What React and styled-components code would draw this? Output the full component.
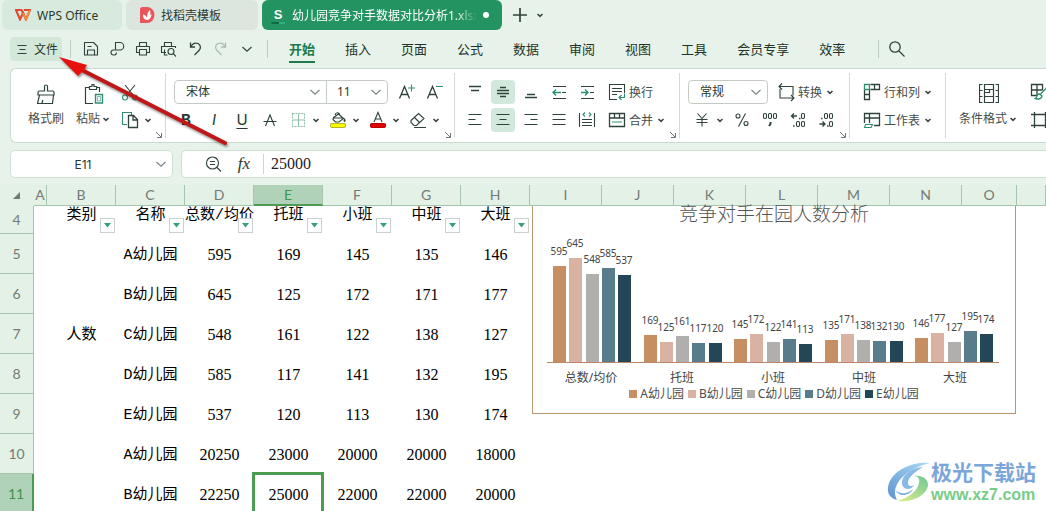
import { Fragment } from "react";
import styled, { createGlobalStyle } from "styled-components";

const GlobalStyle = createGlobalStyle`
  * {
    box-sizing: border-box;
  }

  body {
    margin: 0;
    font-family: "Noto Sans", "Noto Sans CJK SC", sans-serif;
    font-size: 12px;
    color: #27382f;
  }

  button, select, input {
    font: inherit;
    color: inherit;
    margin: 0;
    padding: 0;
    border: 0;
    background: none;
  }
`;

const Page = styled.div`
  position: relative;
  height: 100vh;
  overflow: hidden;
  display: flex;
  flex-direction: column;
  background-color: #e7f3ea;
`;

/* ---------- window tabs ---------- */

const TabStrip = styled.header`
  flex: none;
  display: flex;
  align-items: center;
  gap: 4px;
  height: 30px;
  padding-left: 2px;
`;

const WindowTab = styled.button`
  flex: none;
  display: flex;
  align-items: center;
  gap: 6px;
  width: ${(props) => props.$width};
  height: 30px;
  padding: 0 13px 0 ${(props) => (props.$active ? "8px" : "13px")};
  border-radius: 6px;
  background-color: ${(props) => props.$bkg};
  color: ${(props) => (props.$active ? "#fff" : "#2b3a31")};
`;

const TabTitle = styled.span`
  flex: 1;
  text-align: left;
  white-space: nowrap;
  overflow: hidden;
  mask-image: ${(props) =>
    props.$fade ? "linear-gradient(90deg, #000 88%, transparent)" : "none"};
`;

const UnsavedDot = styled.span`
  width: 6px;
  height: 6px;
  border-radius: 50%;
  background-color: #fff;
`;

const StripActions = styled.div`
  display: flex;
  align-items: center;
  padding-left: 2px;
`;

/* ---------- menu bar ---------- */

const MenuBar = styled.div`
  flex: none;
  display: flex;
  align-items: center;
  height: 38px;
  padding-left: 10px;
`;

const FileButton = styled.button`
  display: flex;
  align-items: center;
  gap: 5px;
  width: 52px;
  height: 24px;
  padding-left: 6px;
  border-radius: 4px;
  background-color: #d4e8da;
  white-space: nowrap;
`;

const Divider = styled.span`
  flex: none;
  width: 1px;
  height: 18px;
  margin: 0 ${(props) => props.$after} 0 ${(props) => props.$before};
  background-color: #bccbc1;
`;

const Nav = styled.nav`
  display: flex;
  gap: 30px;
`;

const NavLink = styled.a`
  flex: none;
  height: 28px;
  font-size: 13px;
  line-height: 28px;
  white-space: nowrap;
  text-decoration: none;
  font-weight: ${(props) => (props.$active ? 700 : 400)};
  color: ${(props) => (props.$active ? "#1f7a4d" : "#1f3328")};
  border-bottom: 2px solid ${(props) => (props.$active ? "#1f7a4d" : "transparent")};
`;

/* ---------- ribbon ---------- */

const Ribbon = styled.section`
  flex: none;
  display: flex;
  align-items: stretch;
  height: 75px;
  margin-left: 10px;
  overflow: hidden;
  background-color: #fff;
  border: 1px solid #ccdbd1;
  border-right: 0;
  border-radius: 6px 0 0 6px;
`;

const Group = styled.div`
  position: relative;
  flex: none;
  display: flex;
  align-items: center;
  padding: 0 ${(props) => props.$end || "12px"} 0 ${(props) => props.$start || "8px"};

  &:not(:last-child)::after {
    content: "";
    position: absolute;
    right: 0;
    top: 4px;
    bottom: 4px;
    width: 1px;
    background-color: #d5dad7;
  }
`;

const Launcher = styled.button`
  position: absolute;
  right: 3px;
  bottom: 3px;
  width: 8px;
  height: 8px;
  display: flex;
`;

const Stack = styled.div`
  display: flex;
  flex-direction: column;
  gap: 4px;
  padding-left: ${(props) => props.$inset || 0};
`;

const Row = styled.div`
  display: flex;
  align-items: center;
  gap: 4px;
  height: 24px;
  padding-left: ${(props) => props.$inset || 0};
`;

const BigButton = styled.button`
  display: flex;
  flex-direction: column;
  align-items: center;
  gap: 6px;
  width: ${(props) => props.$width || "48px"};
  line-height: 18px;
  white-space: nowrap;
  color: #454d49;
`;

const BigLabel = styled.span`
  display: flex;
  align-items: center;
`;

const IconButton = styled.button`
  flex: none;
  display: flex;
  align-items: center;
  justify-content: center;
  width: ${(props) => props.$width || "24px"};
  height: 24px;
  border-radius: 4px;
  background-color: ${(props) => (props.$active ? "#d2e8dd" : "transparent")};
`;

const Split = styled.div`
  display: flex;
`;

const TextButton = styled.button`
  display: flex;
  align-items: center;
  gap: 2px;
  height: 24px;
  padding-left: 4px;
  white-space: nowrap;
  color: #454d49;
`;

const FieldBox = styled.div`
  display: flex;
  height: 24px;
  border: 1px solid #c3cac6;
  border-radius: 4px;
`;

const SelectWrap = styled.div`
  position: relative;
  width: ${(props) => props.$width};

  & + & {
    border-left: 1px solid #c3cac6;
  }

  svg {
    position: absolute;
    right: 5px;
    top: 5px;
    pointer-events: none;
  }
`;

const Select = styled.select`
  appearance: none;
  width: 100%;
  height: 22px;
  padding-left: ${(props) => props.$inset || "11px"};
`;

/* ---------- formula bar ---------- */

const FormulaBar = styled.div`
  flex: none;
  display: flex;
  gap: 8px;
  height: 28px;
  margin: 7px 0 7px 10px;
`;

const NameBox = styled.div`
  display: flex;
  align-items: center;
  width: 163px;
  padding-right: 5px;
  background-color: #fff;
  border: 1px solid #d0dfd5;
  border-radius: 5px;
`;

const NameInput = styled.input`
  flex: 1;
  min-width: 0;
  text-align: center;
  font-family: Inter, sans-serif;
`;

const FormulaBox = styled.div`
  flex: 1;
  display: flex;
  align-items: center;
  gap: 7px;
  padding-left: 19px;
  background-color: #fff;
  border: 1px solid #d0dfd5;
  border-right: 0;
  border-radius: 5px 0 0 5px;
`;

const FormulaInput = styled.input`
  flex: 1;
  min-width: 0;
  height: 20px;
  padding-left: 7px;
  border-left: 1px solid #cfd6d2;
  font-family: "Liberation Serif", serif;
  font-size: 16px;
  color: #222;
`;

/* ---------- sheet ---------- */

const Sheet = styled.main`
  position: relative;
  flex: 1;
  min-height: 0;
  overflow: hidden;
  background-color: #fff;
`;

const Grid = styled.table`
  width: 100%;
  min-width: 1017px;
  table-layout: fixed;
  border-collapse: separate;
  border-spacing: 0;
`;

const Col = styled.col`
  width: ${(props) => props.$width};
`;

const ColHead = styled.th`
  height: 21px;
  padding: 0;
  font-family: Lato, sans-serif;
  font-size: 14px;
  line-height: 18px;
  font-weight: 400;
  color: ${(props) => (props.$active ? "#3f9548" : "#747b76")};
  background-color: ${(props) => (props.$active ? "#b0d2b8" : "#e4f1e6")};
  border-right: 1px solid ${(props) => (props.$corner ? "transparent" : "#a5c5ae")};
  border-bottom: ${(props) =>
    props.$active ? "2px solid #4b9b50" : props.$corner ? "1px solid transparent" : "1px solid #a5c5ae"};

  svg {
    display: block;
    margin: 1px 0 0 13px;
  }
`;

const RowHead = styled.th`
  padding: 0;
  font-family: Lato, sans-serif;
  font-size: 14px;
  line-height: 18px;
  font-weight: 400;
  color: ${(props) => (props.$active ? "#3f9548" : "#747b76")};
  background-color: ${(props) => (props.$active ? "#b0d2b8" : "#e4f1e6")};
  border-right: ${(props) => (props.$active ? "2px solid #4b9b50" : "1px solid #a5c5ae")};
  border-bottom: 1px solid #a5c5ae;
`;

const SheetRow = styled.tr`
  height: ${(props) => (props.$short ? "28px" : "40px")};
`;

const Cell = styled.td`
  position: relative;
  padding: ${(props) => (props.$top ? "1px" : props.$number ? "2px" : "4px")} 0 0;
  text-align: center;
  white-space: nowrap;
  color: #000;
  line-height: 18px;
  vertical-align: ${(props) => (props.$top ? "top" : "middle")};
  font-family: ${(props) =>
    props.$number ? '"Liberation Serif", serif' : '"Liberation Mono", "Noto Sans CJK SC", monospace'};
  font-size: ${(props) => (props.$number ? "16px" : "15px")};

  &::after {
    content: ${(props) => (props.$selected ? '""' : "none")};
    position: absolute;
    inset: -2px -1px -2px -2px;
    border: 3px solid #4b9b50;
  }
`;

const FilterButton = styled.button`
  position: absolute;
  right: 1px;
  bottom: 1px;
  width: 15px;
  height: 15px;
  display: flex;
  align-items: center;
  justify-content: center;
  background-color: #fff;
  border: 1px solid #cbd0cd;
`;

/* ---------- chart ---------- */

const ChartBox = styled.figure`
  position: absolute;
  left: 532px;
  top: 21px;
  width: 484px;
  margin: 0;
  padding-bottom: 10px;
  background-color: #fff;
  border: 1px solid #b9956f;
  border-top: 0;
  color: #4d4d4d;
`;

const ChartTitle = styled.figcaption`
  height: 18px;
  font-size: 19px;
  font-weight: 300;
  line-height: 16px;
  text-align: center;
  color: #555;
`;

const Plot = styled.svg`
  display: block;
  width: 100%;

  text {
    text-anchor: middle;
    fill: #444;
  }
`;

const Legend = styled.ul`
  display: flex;
  justify-content: center;
  gap: 4px;
  margin: 0;
  padding: 0;
  list-style: none;
  line-height: 18px;
`;

const LegendItem = styled.li`
  display: flex;
  align-items: center;
  gap: 3px;

  &::before {
    content: "";
    width: 8px;
    height: 8px;
    background-color: ${(props) => props.$color};
  }
`;

/* ---------- overlays ---------- */

const Pointer = styled.svg`
  position: absolute;
  left: 50px;
  top: 50px;
  pointer-events: none;
  filter: drop-shadow(1px 2px 1px rgba(0, 0, 0, 0.4));
`;

const SiteMark = styled.div`
  position: absolute;
  right: 10px;
  bottom: 7px;
  display: flex;
  align-items: center;
`;

const SiteText = styled.div`
  display: flex;
  flex-direction: column;
  font-family: "Liberation Sans", "Noto Sans CJK SC", sans-serif;
`;

const SiteName = styled.span`
  font-size: 21px;
  line-height: 26px;
  font-weight: 700;
  color: #7ba6da;
`;

const SiteUrl = styled.span`
  font-size: 16px;
  line-height: 18px;
  font-weight: 700;
  color: #79cc88;
`;

/* ---------- icons ---------- */

const INK = "#2f433a";
const GREEN = "#2f8f74";

const Icon = ({ size = 20, children }) => (
  <svg
    width={size}
    height={size}
    viewBox={`0 0 ${size} ${size}`}
    fill="none"
    stroke={INK}
    strokeWidth="1.1"
    aria-hidden="true"
  >
    {children}
  </svg>
);

const Chevron = () => (
  <svg width="12" height="12" viewBox="0 0 12 12" fill="none" stroke="#3c4a43" strokeWidth="1.6" aria-hidden="true">
    <path d="M3.5 5L6 7.3 8.5 5" />
  </svg>
);

const WideChevron = ({ color = "#7b8580" }) => (
  <svg width="12" height="12" viewBox="0 0 12 12" fill="none" stroke={color} strokeWidth="1.2" aria-hidden="true">
    <path d="M1.5 4L6 8.2 10.5 4" />
  </svg>
);

const icons = {
  menu: <path d="M1.500 2.500h9M3.500 6.500h6M1.500 10.500h9" />,
  save: <path d="M3.5 3.5h9l4 4v8.5h-13zM6.5 16v-5h7v5M6.5 7.500h4" strokeLinejoin="round" />,
  exportPdf: (
    <path d="M8.5 11V3.500h4.500a3.500 3.500 0 0 1 0 7.500H6.500a2.500 2.500 0 0 0 0 5h1a2.500 2.500 0 0 0 2-2.500" />
  ),
  print: (
    <path d="M6.5 7V3.500h7V7M6 13.500H3.500V7.500h13v6H14M6.500 10.500h7v5.500h-7z" strokeLinejoin="round" />
  ),
  preview: (
    <>
      <path d="M5.5 7V3.500h7V7M7 13.500H2.500V7.500h14V9M5.500 10.500v5.500h3" />
      <circle cx="12" cy="12.5" r="3" />
      <path d="M14.2 14.7l2.800 2.800" />
    </>
  ),
  undo: <path d="M5.5 3.500v4.500H10M5.500 8c2-3.500 5-4.500 7.500-3.500 3 1.500 3 5 1 7L9.500 16" strokeWidth="1.3" />,
  redo: (
    <path
      d="M14.5 3.500v4.500H10M14.500 8c-2-3.500-5-4.500-7.500-3.500-3 1.500-3 5-1 7l4.500 4.500"
      stroke="#aebbb3"
      strokeWidth="1.3"
    />
  ),
  search: (
    <>
      <circle cx="8" cy="8" r="5.2" strokeWidth="1.3" />
      <path d="M12 12l5.500 5.500" strokeWidth="1.3" />
    </>
  ),
  plus: <path d="M10 3v14M3 10h14" strokeWidth="1.7" />,
  brush: (
    <path
      d="M8.5 7V2.500a1.500 1.500 0 0 1 3 0V7h5a1.500 1.500 0 0 1 1.500 1.500V11H2V8.500A1.500 1.500 0 0 1 3.500 7zM3.500 11L1.500 19.500h15L17.500 11M6 19.500l.8-3.500"
      strokeWidth="1.2"
    />
  ),
  paste: (
    <>
      <path d="M5 3.500H1.500v16H9M12 3.500h3.500V8M5.500 5.500v-3H8V.500h2v2h2.500v3z" strokeWidth="1.2" />
      <path d="M11.5 10.500h7v8.500h-7z" stroke={GREEN} strokeWidth="1.4" />
      <path d="M13.500 12.500h3v4.500h-3z" stroke={GREEN} strokeWidth=".6" />
    </>
  ),
  cut: (
    <>
      <path d="M5 3l8.500 10.500M15 3L6.500 13.500" />
      <circle cx="5" cy="15.5" r="2.5" stroke={GREEN} />
      <circle cx="15" cy="15.5" r="2.5" stroke={GREEN} />
    </>
  ),
  copy: (
    <>
      <path d="M7 14.500H2.500v-12h9V5" stroke={GREEN} />
      <path d="M8.5 5.500h5l4 4v8h-9zM13 5.500v4.500h4.500" strokeWidth="1.3" />
    </>
  ),
  strike: <path d="M3.5 11.500h13M5.500 16L10 5l4.500 11" />,
  grow: (
    <>
      <path d="M2.5 16.500L7.500 4.500l5 12M4 12.500h7" strokeWidth="1.3" />
      <path d="M14.500 2.500v7M11 6h7" stroke={GREEN} />
    </>
  ),
  shrink: (
    <>
      <path d="M2.5 16.500L7.500 4.500l5 12M4 12.500h7" strokeWidth="1.3" />
      <path d="M11 4.500h7" stroke={GREEN} />
    </>
  ),
  border: (
    <>
      <path d="M4.5 3.500h12v13h-12z" stroke="#8fbfa9" strokeDasharray="2 1" />
      <path d="M10.5 4v12M5 10h11" stroke="#8fbfa9" />
    </>
  ),
  fill: (
    <>
      <path d="M7 5c1-3.500 5-2.500 4.500.5M5.500 7.500l5-3.500 5 4.500-4.500 3.500H7.500L5 9.500zM5.500 8h9" />
      <path d="M16.500 8c1.500 2 1.500 3.500 0 4-1.300-.5-1.300-2 0-4" fill={INK} stroke="none" />
      <rect x="2.5" y="13.5" width="15" height="4" rx="1.5" fill="#ffff00" stroke="#b5b52a" />
    </>
  ),
  fontColor: (
    <>
      <path d="M6 12l4-9.500L14 12M7.500 9h5" />
      <rect x="2.5" y="13.5" width="15" height="4" rx="1.5" fill="#e00000" stroke="#b60000" />
    </>
  ),
  eraser: <path d="M3 10.500L10.500 3.500l5.500 5-7.500 7H6L3 12.500zM6.500 7.500l5.500 5.500M6 17.500h12" />,
  alignTop: <path d="M4 4.500h12M6 8.500h8" strokeWidth="1.3" />,
  alignMiddle: <path d="M7 5.500h6M4 8.500h12M4 11.500h12M7 14.500h6" strokeWidth="1.3" />,
  alignBottom: <path d="M6 12.500h8M4 15.500h12" strokeWidth="1.3" />,
  outdent: (
    <>
      <path d="M4 4.500h13M13 10.500h4M4 16.500h13" />
      <path d="M12 10.500H4M7 7.500l-3 3 3 3" stroke={GREEN} strokeWidth="1.4" />
    </>
  ),
  indent: (
    <>
      <path d="M4 4.500h13M13 10.500h4M4 16.500h13" />
      <path d="M4 10.500h7M8 7.500l3 3-3 3" stroke={GREEN} strokeWidth="1.4" />
    </>
  ),
  alignLeft: <path d="M3.5 4.500h13M3.500 9.500h7M3.500 14.500h13" strokeWidth="1.2" />,
  alignCenter: <path d="M3.5 4.500h13M6.500 9.500h7M3.500 14.500h13" strokeWidth="1.2" />,
  alignRight: <path d="M3.5 4.500h13M9.500 9.500h7M3.500 14.500h13" strokeWidth="1.2" />,
  justify: <path d="M3.5 4.500h13M3.500 9.500h13M3.500 14.500h13" strokeWidth="1.2" />,
  distribute: (
    <>
      <path d="M2.5 3v14M17.500 3v14M5 9.500h10M5 12.500h10M5 15.500h10" />
      <path d="M8 2.500L6 4.500l2 2M12 2.500l2 2-2 2" stroke={GREEN} />
    </>
  ),
  wrap: (
    <>
      <path d="M10 17.500H2.500v-15h15V11M5 6.500h10M5 9.500h10M5 12.500h5" />
      <path d="M17.5 11.500v4h-5M14.500 13l-2.500 2.500 2.500 2.500" stroke={GREEN} />
    </>
  ),
  merge: (
    <>
      <path d="M2.5 3.500h15v13h-15zM2.500 8h15M7.500 3.500V8M12.500 3.500V8" strokeWidth="1.3" />
      <path d="M5 12h10" stroke={GREEN} />
    </>
  ),
  convert: <path d="M6 1.500l-3 3 3 3M3 4.500h14v9M4 7v9h14M15 13l3 3-3 3" />,
  yen: <path d="M5.5 3.500L10 8.500l4.500-5M4.500 9.500h11M4.500 12.500h11M10 8.500v8" />,
  percent: (
    <>
      <circle cx="6" cy="6" r="2" />
      <circle cx="14" cy="13.5" r="2" />
      <path d="M13.5 3.500L6.500 16.500" />
    </>
  ),
  thousands: (
    <>
      <rect x="3.5" y="3.5" width="3" height="5" rx="1.2" />
      <rect x="8.5" y="3.5" width="3" height="5" rx="1.2" />
      <rect x="13.5" y="3.5" width="3" height="5" rx="1.2" />
      <path d="M10.5 12v2l-1.500 2" strokeWidth="2" />
    </>
  ),
  addDecimal: (
    <>
      <path d="M9 6H3.500M6 3.500L3.500 6 6 8.500M11 8.500h1.500M5 16h1.500" strokeWidth="1.3" />
      <rect x="13.5" y="3.5" width="3" height="5" rx="1.2" />
      <rect x="8.5" y="11.5" width="3" height="5" rx="1.2" />
      <rect x="13.5" y="11.5" width="3" height="5" rx="1.2" />
    </>
  ),
  cutDecimal: (
    <>
      <path d="M5 8.500h1.500M3.500 14H9M6.500 11.500L9 14l-2.500 2.500M11 16h1.500" strokeWidth="1.3" />
      <rect x="8.5" y="3.5" width="3" height="5" rx="1.2" />
      <rect x="13.5" y="3.5" width="3" height="5" rx="1.2" />
      <rect x="13.5" y="11.5" width="3" height="5" rx="1.2" />
    </>
  ),
  rowsCols: (
    <>
      <path d="M8.5 2.500h9v5h-9M12.500 2.500v5M2.500 8v9.500h5V8M2.500 12.500h5" strokeWidth="1.3" />
      <path d="M2.5 2.500h5v5h-5z" stroke={GREEN} strokeWidth="1.3" />
    </>
  ),
  worksheet: (
    <>
      <path d="M2.5 13V3.500h15v12H12M2.500 8h15M7.500 3.500V13" strokeWidth="1.3" />
      <path d="M3.5 14.500h7l-1.500 3H2.500z" stroke={GREEN} />
    </>
  ),
  condFormat: (
    <path
      d="M3.5 .5h-3v18h3M.5 6.500h3M.5 12.500h3M16.500.5h3v18h-3M16.500 6.500h3M16.500 12.500h3M5.500.5h9v5h-9zM5.500 5.500v7h9v-7M10.500 5.500v3h-5M5.500 12.500v6h9v-6"
      strokeWidth="1.2"
    />
  ),
  tableStyle: (
    <>
      <path d="M8 13.500H2.500v-11h11V8M2.500 8h11M8 2.500v11" strokeWidth="1.3" />
      <path d="M19 4.500l-8 8M10.500 12c-3.500 0-2 3.500-4 4.500 2.500 1 6.500.5 6.500-2.500z" stroke={GREEN} strokeWidth="1.4" />
    </>
  ),
  frame: <path d="M5.5 2v16M16.500 2v16M2 4.500h18M2 15.500h18" strokeWidth="1.3" />,
};

const ToolIcon = ({ name, size }) => <Icon size={size}>{icons[name]}</Icon>;

const GlyphText = styled.span`
  font-family: Inter, "Liberation Sans", sans-serif;
  font-size: 15px;
  line-height: 20px;
  font-weight: ${(props) => (props.$bold ? 700 : 400)};
  font-style: ${(props) => (props.$italic ? "italic" : "normal")};
  text-decoration: ${(props) => (props.$underline ? "underline" : "none")};
  text-underline-offset: 3px;
`;

const FxText = styled.span`
  font-family: "Liberation Serif", serif;
  font-size: 17px;
  font-style: italic;
  line-height: 20px;
`;

const Tool = ({ name, label, ...rest }) => (
  <IconButton aria-label={label} {...rest}>
    <ToolIcon name={name} />
  </IconButton>
);

const SplitTool = ({ name, label }) => (
  <Split>
    <Tool name={name} label={label} />
    <IconButton $width="12px" aria-label={`${label}选项`}>
      <Chevron />
    </IconButton>
  </Split>
);

const GroupLauncher = () => (
  <Launcher aria-label="更多设置">
    <svg width="8" height="8" viewBox="0 0 8 8" fill="none" stroke="#6f7773" aria-hidden="true">
      <path d="M1 1l5 5M6.5 2v4.500H2" />
    </svg>
  </Launcher>
);

const Picker = ({ label, value, width, inset }) => (
  <SelectWrap $width={width}>
    <Select aria-label={label} defaultValue={value} $inset={inset}>
      <option>{value}</option>
    </Select>
    <WideChevron />
  </SelectWrap>
);

/* ---------- data ---------- */

const menus = ["开始", "插入", "页面", "公式", "数据", "审阅", "视图", "工具", "会员专享", "效率"];

const quickTools = [
  ["save", "保存"],
  ["exportPdf", "输出为PDF"],
  ["print", "打印"],
  ["preview", "打印预览"],
  ["undo", "撤销"],
  ["redo", "恢复"],
];

const columns = [
  ["A", "13px"],
  ["B", "69px"],
  ["C", "69px"],
  ["D", "69px"],
  ["E", "69px"],
  ["F", "69px"],
  ["G", "69px"],
  ["H", "69px"],
  ["I", "72px"],
  ["J", "72px"],
  ["K", "72px"],
  ["L", "72px"],
  ["M", "72px"],
  ["N", "72px"],
  ["O", "55px"],
];

const headings = ["类别", "名称", "总数/均价", "托班", "小班", "中班", "大班"];

const rows = [
  [5, "", "A幼儿园", 595, 169, 145, 135, 146],
  [6, "", "B幼儿园", 645, 125, 172, 171, 177],
  [7, "人数", "C幼儿园", 548, 161, 122, 138, 127],
  [8, "", "D幼儿园", 585, 117, 141, 132, 195],
  [9, "", "E幼儿园", 537, 120, 113, 130, 174],
  [10, "", "A幼儿园", 20250, 23000, 20000, 20000, 18000],
  [11, "", "B幼儿园", 22250, 25000, 22000, 22000, 20000],
];

const series = rows.slice(0, 5).map((row, i) => ({
  name: row[2],
  values: row.slice(3),
  color: ["#c58f63", "#d9b2a2", "#b1afae", "#587c8b", "#234756"][i],
}));

const BASELINE = 138;
const UNIT = 96 / 595;

const Chart = () => (
  <ChartBox>
    <ChartTitle>竞争对手在园人数分析</ChartTitle>
    <Plot viewBox="0 0 482 161" role="img" aria-label="竞争对手在园人数分析">
      {headings.slice(2).map((heading, g) => (
        <Fragment key={heading}>
          {series.map((s, i) => {
            const x = Math.round(20 + g * 90.5 + i * 16.25);
            const h = Math.round(s.values[g] * UNIT);
            return (
              <Fragment key={s.name}>
                <rect x={x} y={BASELINE - h} width="13" height={h} fill={s.color} />
                <text x={x + 6} y={BASELINE - h - 11} fontSize="10">
                  {s.values[g]}
                </text>
              </Fragment>
            );
          })}
          <text x={58 + g * 91} y="158" fontSize="12">
            {heading}
          </text>
        </Fragment>
      ))}
      <path d={`M14 ${BASELINE}.5h452`} stroke="#b9876a" />
    </Plot>
    <Legend>
      {series.map((s) => (
        <LegendItem key={s.name} $color={s.color}>
          {s.name}
        </LegendItem>
      ))}
    </Legend>
  </ChartBox>
);

const SheetGrid = () => (
  <Grid>
    <colgroup>
      <Col $width="34px" />
      {columns.map(([name, width]) => (
        <Col key={name} $width={width} />
      ))}
      <Col />
    </colgroup>
    <thead>
      <tr>
        <ColHead $corner>
          <svg width="8" height="8" viewBox="0 0 8 8" aria-hidden="true">
            <path d="M7 0v7H0z" fill="#6f7a73" />
          </svg>
        </ColHead>
        {columns.map(([name]) => (
          <ColHead key={name} $active={name === "E"}>
            {name}
          </ColHead>
        ))}
        <ColHead />
      </tr>
    </thead>
    <tbody>
      <SheetRow $short>
        <RowHead>4</RowHead>
        <Cell />
        {headings.map((heading) => (
          <Cell key={heading} $top>
            {heading}
            <FilterButton aria-label={`筛选${heading}`}>
              <svg width="7" height="5" viewBox="0 0 7 5" aria-hidden="true">
                <path d="M0 0h7L3.500 4.500z" fill="#35a080" />
              </svg>
            </FilterButton>
          </Cell>
        ))}
      </SheetRow>
      {rows.map(([number, ...cells]) => (
        <SheetRow key={number}>
          <RowHead $active={number === 11}>{number}</RowHead>
          <Cell />
          {cells.map((cell, i) => (
            <Cell key={i} $number={i > 1} $selected={number === 11 && i === 3}>
              {cell}
            </Cell>
          ))}
        </SheetRow>
      ))}
    </tbody>
  </Grid>
);

const App = () => {
  return (
    <Page>
      <GlobalStyle />
      <TabStrip>
        <WindowTab $width="120px" $bkg="#d8eadd">
          <svg width="16" height="12" viewBox="0 0 16 12" fill="none" strokeWidth="2" aria-hidden="true">
            <path d="M0 1h6.500L9 6" stroke="#e8433a" />
            <path d="M1 1l4 9.500L8 4l3 6.500L15 1H9" stroke="#e2452f" />
            <path d="M8 4l3 6.500L15 1" stroke="#f08a3c" />
          </svg>
          <TabTitle>WPS Office</TabTitle>
        </WindowTab>
        <WindowTab $width="132px" $bkg="#dce5de">
          <svg width="16" height="16" viewBox="0 0 16 16" aria-hidden="true">
            <path d="M1 2.500A2.500 2.500 0 0 1 3.500 0H8a7.500 8 0 0 1 0 16H1z" fill="#e9575b" />
            <path
              d="M8 13C4.500 12.500 4 10 4 7.500c2 .3 3.200 1.500 4 3 .2-3.500 1-6 3-7.500.5 2 .5 3 0 4.500 1-.2 1 0 1.500.3C12 10.500 11 12.700 8 13z"
              fill="#fff"
            />
          </svg>
          <TabTitle>找稻壳模板</TabTitle>
        </WindowTab>
        <WindowTab $width="240px" $bkg="#239461" $active>
          <svg width="16" height="18" viewBox="0 0 16 18" aria-hidden="true">
            <text x="8" y="13" textAnchor="middle" fontFamily="Liberation Sans" fontWeight="700" fontSize="13" fill="#fff">
              S
            </text>
            <path d="M1 16h8v2H3a2 2 0 0 1-2-2z" fill="#0b6b42" />
            <path d="M9 16h6v2H9z" fill="#2fb07a" />
          </svg>
          <TabTitle $fade>幼儿园竞争对手数据对比分析1.xlsx</TabTitle>
          <UnsavedDot />
        </WindowTab>
        <StripActions>
          <IconButton aria-label="新建标签">
            <ToolIcon name="plus" />
          </IconButton>
          <IconButton $width="16px" aria-label="标签列表">
            <Chevron />
          </IconButton>
        </StripActions>
      </TabStrip>

      <MenuBar>
        <FileButton>
          <ToolIcon name="menu" size={13} />
          文件
        </FileButton>
        <Divider $before="8px" $after="7px" />
        {quickTools.map(([name, label]) => (
          <Tool key={name} name={name} label={label} $width="26px" />
        ))}
        <IconButton $width="26px" aria-label="自定义快速访问">
          <WideChevron color="#2f433a" />
        </IconButton>
        <Divider $before="7px" $after="21px" />
        <Nav>
          {menus.map((menu, i) => (
            <NavLink key={menu} href="#" $active={i === 0}>
              {menu}
            </NavLink>
          ))}
        </Nav>
        <Divider $before="33px" $after="6px" />
        <Tool name="search" label="搜索" />
      </MenuBar>

      <Ribbon>
        <Group $start="11px">
          <BigButton>
            <ToolIcon name="brush" />
            <BigLabel>格式刷</BigLabel>
          </BigButton>
          <BigButton>
            <ToolIcon name="paste" />
            <BigLabel>
              粘贴
              <Chevron />
            </BigLabel>
          </BigButton>
          <Stack>
            <Row>
              <Tool name="cut" label="剪切" />
            </Row>
            <Row>
              <SplitTool name="copy" label="复制" />
            </Row>
          </Stack>
          <GroupLauncher />
        </Group>

        <Group $end="8px">
          <Stack>
            <Row>
              <FieldBox>
                <Picker label="字体" value="宋体" width="151px" />
                <Picker label="字号" value="11" width="61px" inset="10px" />
              </FieldBox>
              <Row $inset="3px">
                <Tool name="grow" label="增大字号" />
                <Tool name="shrink" label="减小字号" />
              </Row>
            </Row>
            <Row>
              <IconButton aria-label="加粗">
                <GlyphText $bold>B</GlyphText>
              </IconButton>
              <IconButton aria-label="倾斜">
                <GlyphText $italic>I</GlyphText>
              </IconButton>
              <IconButton aria-label="下划线">
                <GlyphText $underline>U</GlyphText>
              </IconButton>
              <Tool name="strike" label="删除线" />
              <SplitTool name="border" label="边框" />
              <SplitTool name="fill" label="填充颜色" />
              <SplitTool name="fontColor" label="字体颜色" />
              <SplitTool name="eraser" label="清除" />
            </Row>
          </Stack>
          <GroupLauncher />
        </Group>

        <Group $end="13px">
          <Stack>
            <Row>
              <Tool name="alignTop" label="顶端对齐" />
              <Tool name="alignMiddle" label="垂直居中" $active />
              <Tool name="alignBottom" label="底端对齐" />
              <Tool name="outdent" label="减少缩进" />
              <Tool name="indent" label="增加缩进" />
              <TextButton>
                <ToolIcon name="wrap" />
                换行
              </TextButton>
            </Row>
            <Row>
              <Tool name="alignLeft" label="左对齐" />
              <Tool name="alignCenter" label="水平居中" $active />
              <Tool name="alignRight" label="右对齐" />
              <Tool name="justify" label="两端对齐" />
              <Tool name="distribute" label="分散对齐" />
              <TextButton>
                <ToolIcon name="merge" />
                合并
                <Chevron />
              </TextButton>
            </Row>
          </Stack>
          <GroupLauncher />
        </Group>

        <Group>
          <Stack>
            <Row>
              <FieldBox>
                <Picker label="数字格式" value="常规" width="78px" />
              </FieldBox>
              <TextButton>
                <ToolIcon name="convert" />
                转换
                <Chevron />
              </TextButton>
            </Row>
            <Row $inset="2px">
              <SplitTool name="yen" label="货币" />
              <Tool name="percent" label="百分比" />
              <Tool name="thousands" label="千位分隔" />
              <Tool name="addDecimal" label="增加小数位" />
              <Tool name="cutDecimal" label="减少小数位" />
            </Row>
          </Stack>
          <GroupLauncher />
        </Group>

        <Group>
          <Stack>
            <TextButton>
              <ToolIcon name="rowsCols" />
              行和列
              <Chevron />
            </TextButton>
            <TextButton>
              <ToolIcon name="worksheet" />
              工作表
              <Chevron />
            </TextButton>
          </Stack>
        </Group>

        <Group $start="9px" $end="1px">
          <BigButton $width="68px">
            <ToolIcon name="condFormat" />
            <BigLabel>
              条件格式
              <Chevron />
            </BigLabel>
          </BigButton>
          <Stack $inset="4px">
            <Tool name="tableStyle" label="表格样式" />
            <Tool name="frame" label="单元格样式" />
          </Stack>
        </Group>
      </Ribbon>

      <FormulaBar>
        <NameBox>
          <NameInput aria-label="名称框" defaultValue="E11" />
          <WideChevron />
        </NameBox>
        <FormulaBox>
          <IconButton aria-label="缩放">
            <Icon>
              <circle cx="9.5" cy="9" r="6" />
              <path d="M7 7.500h5M7 10.500h5M14 13.500l4 4" />
            </Icon>
          </IconButton>
          <IconButton aria-label="插入函数">
            <FxText>fx</FxText>
          </IconButton>
          <FormulaInput aria-label="编辑栏" defaultValue="25000" />
        </FormulaBox>
      </FormulaBar>

      <Sheet>
        <SheetGrid />
        <Chart />
      </Sheet>

      <Pointer width="190" height="104" viewBox="0 0 190 104" aria-hidden="true">
        <path d="M30 19L175 93" stroke="#c01818" strokeWidth="4" strokeLinecap="round" />
        <path d="M9 7l28 8-4 6-5 5z" fill="#e80f0f" />
      </Pointer>

      <SiteMark>
        <svg width="44" height="42" viewBox="0 0 44 42" aria-hidden="true">
          <defs>
            <linearGradient id="swirlTop" x1="0" y1="1" x2="1" y2="0">
              <stop offset="0" stopColor="#5f93cf" />
              <stop offset="1" stopColor="#a9dcf5" />
            </linearGradient>
            <linearGradient id="swirlBottom" x1="0" y1="1" x2="1" y2="0">
              <stop offset="0" stopColor="#e0ef8a" />
              <stop offset="1" stopColor="#6cc795" />
            </linearGradient>
          </defs>
          <path d="M43 2C29 0 8 7 2 22c-3 9 0 15 8 17-3-6-3-12 2-19C18 12 30 5 43 2z" fill="url(#swirlTop)" />
          <path
            d="M36 6c-12 1-22 9-21 17 1 6 9 7 12 1-3 2-6 1-6-2 0-5 6-11 15-16z"
            fill="#8ab9e4"
          />
          <path d="M8 28c2 5 12 6 18 0-3 7-15 9-18 0z" fill="#7fb2de" />
          <path d="M27 15c4 0 6 3 5 7-2 8-9 14-22 18 16 2 30-6 31-16 0-6-6-10-14-9z" fill="url(#swirlBottom)" />
        </svg>
        <SiteText>
          <SiteName>极光下载站</SiteName>
          <SiteUrl>www.xz7.com</SiteUrl>
        </SiteText>
      </SiteMark>
    </Page>
  );
};

export default App;
